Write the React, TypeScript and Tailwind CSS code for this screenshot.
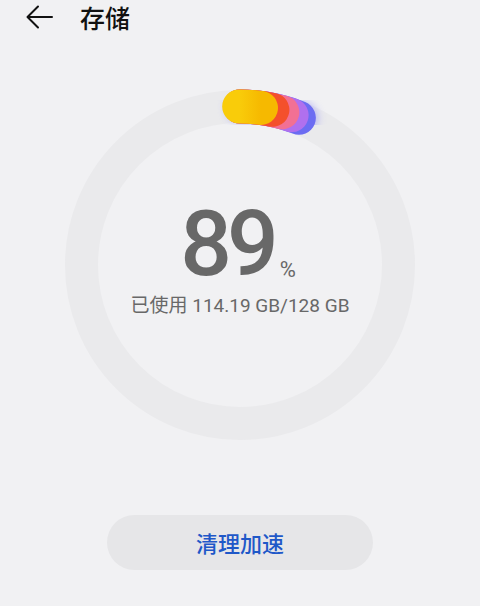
import React from "react";

const R = 158.5;
const C = 175;

function arc(from: number, to: number) {
    const p = (deg: number) => {
        const a = (deg * Math.PI) / 180;
        return `${(C + R * Math.sin(a)).toFixed(2)} ${(C - R * Math.cos(a)).toFixed(2)}`;
    };
    return `M ${p(from)} A ${R} ${R} 0 0 1 ${p(to)}`;
}

function UsageBlob() {
    return (
        <svg className="absolute left-0 top-0 overflow-visible" width="350" height="350" viewBox="0 0 350 350">
            <defs>
                <filter id="soft" x="-50%" y="-50%" width="200%" height="200%">
                    <feGaussianBlur stdDeviation="4" />
                </filter>
                <linearGradient id="yellow" x1="0" y1="0" x2="1" y2="0">
                    <stop offset="0" stopColor="#f9cc0a" />
                    <stop offset="1" stopColor="#f6b900" />
                </linearGradient>
            </defs>
            <path d={arc(1, 22.5)} stroke="#8f8cf5" strokeWidth="34" strokeLinecap="round" fill="none" filter="url(#soft)" opacity="0.6" />
            <path d={arc(0, 21.8)} stroke="#6c6cf2" strokeWidth="34" strokeLinecap="round" fill="none" />
            <path d={arc(0, 19)} stroke="#b070ee" strokeWidth="34" strokeLinecap="round" fill="none" />
            <path d={arc(0, 15.5)} stroke="#f27094" strokeWidth="34" strokeLinecap="round" fill="none" />
            <path d={arc(0, 11.8)} stroke="#f4502c" strokeWidth="34" strokeLinecap="round" fill="none" />
            <path d={arc(-0.3, 7.6)} stroke="url(#yellow)" strokeWidth="34" strokeLinecap="round" fill="none" />
        </svg>
    );
}

export default function App() {
    return (
        <div
            className="w-[480px] h-[606px] bg-[#f1f1f3] flex flex-col overflow-hidden"
            style={{fontFamily: '"Noto Sans", "Noto Sans CJK SC", sans-serif'}}
        >
            {/* Header */}
            <div className="h-[34px] flex items-center pl-[26px]">
                <svg width="28" height="24" viewBox="0 0 28 24" fill="none" stroke="#111" strokeWidth="2" strokeLinecap="round" strokeLinejoin="round">
                    <path d="M26 12H2" />
                    <path d="M12 1.5L1.5 12L12 22.5" />
                </svg>
                <span className="ml-[26px] text-[25px] leading-none text-[#111] font-medium" style={{fontFamily: '"Noto Sans CJK SC", sans-serif'}}>
                    存储
                </span>
            </div>

            {/* Ring */}
            <div className="relative w-[350px] h-[350px] mx-auto mt-[56px] rounded-full border-[33px] border-[#eaeaec] flex flex-col items-center justify-center">
                <div className="absolute -left-[33px] -top-[33px]">
                    <UsageBlob />
                </div>
                <div className="flex items-end pr-[4px] -mt-[17px]">
                    <span className="text-[91px] leading-none text-[#686868] font-medium tracking-[-5px]" style={{fontFamily: 'Roboto, "Noto Sans", sans-serif'}}>
                        89
                    </span>
                    <span className="text-[22px] leading-none text-[#686868] ml-[6px] mb-[9px]" style={{fontFamily: 'Roboto, "Noto Sans", sans-serif'}}>
                        %
                    </span>
                </div>
                <div className="mt-[6px] text-[19px] leading-none text-[#686868] whitespace-nowrap" style={{fontFamily: 'Roboto, "Noto Sans CJK SC", sans-serif'}}>
                    已使用 114.19 GB/128 GB
                </div>
            </div>

            {/* Button */}
            <div className="flex justify-center mt-[75px]">
                <button className="w-[266px] h-[55px] rounded-full bg-[#e6e6e8] text-[#1f58c8] text-[22px] font-medium" style={{fontFamily: '"Noto Sans CJK SC", sans-serif'}}>
                    清理加速
                </button>
            </div>
        </div>
    );
}
